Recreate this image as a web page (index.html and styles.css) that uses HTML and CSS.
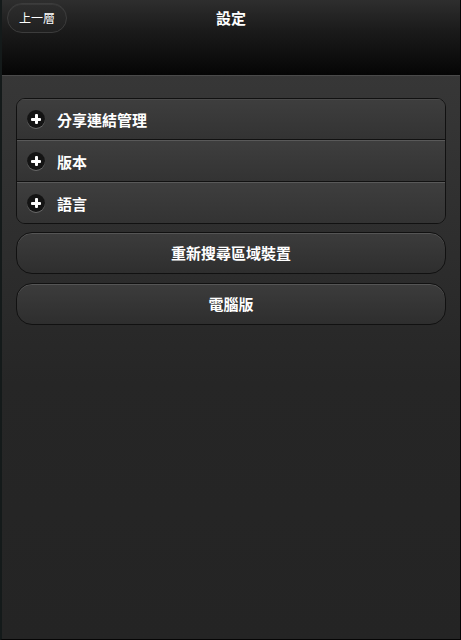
FILE: index.html
```html
<!DOCTYPE html>
<html lang="zh-Hant">

<head>
    <meta charset="UTF-8">
    <meta name="viewport" content="width=device-width, initial-scale=1.0">
    <title>設定</title>
    <link rel="stylesheet" href="styles.css">
</head>

<body>
    <div class="page">
        <header class="header">
            <a class="back-btn" href="javascript:void(0)">上一層</a>
            <h1>設定</h1>
        </header>

        <main class="content">
            <!-- 可展開的設定項目 -->
            <div class="collapsible-set">
                <div class="collapsible">
                    <span class="plus-icon"></span>
                    <span>分享連結管理</span>
                </div>
                <div class="collapsible">
                    <span class="plus-icon"></span>
                    <span>版本</span>
                </div>
                <div class="collapsible">
                    <span class="plus-icon"></span>
                    <span>語言</span>
                </div>
            </div>

            <a class="btn" href="javascript:void(0)">重新搜尋區域裝置</a>
            <a class="btn" href="javascript:void(0)">電腦版</a>
        </main>
    </div>
</body>

</html>
```

FILE: styles.css
```css
/* 頁面基本樣式 */
html, body {
    height: 100%;
}

body {
    margin: 0;
    font-family: "Noto Sans CJK TC", "Liberation Sans", sans-serif;
    background-color: #262626;
}

.page {
    box-sizing: border-box;
    height: 640px;
    display: flex;
    flex-direction: column;
    border-left: 2px solid #141a1a;
    border-right: 1px solid #050505;
    border-bottom: 1px solid #050505;
    background: linear-gradient(#3b3b3b, #262626 60%, #242424);
}

/* 標題列 */
.header {
    height: 76px;
    position: relative;
    background: linear-gradient(#2e2e2e, #1b1b1b 40%, #050505);
    border-bottom: 1px solid #4a4a4a;
    box-sizing: border-box;
}

.header h1 {
    margin: 0;
    padding-top: 7px;
    text-align: center;
    font-size: 15px;
    font-weight: bold;
    color: #fff;
    line-height: 22px;
}

.back-btn {
    position: absolute;
    left: 5px;
    top: 3px;
    width: 58px;
    height: 28px;
    border: 1px solid #3c3c3c;
    border-radius: 16px;
    background: linear-gradient(#2d2d2d, #202020);
    color: #fff;
    font-size: 12px;
    line-height: 28px;
    text-align: center;
    text-decoration: none;
    box-shadow: inset 0 1px 0 rgba(255, 255, 255, 0.06);
}

/* 內容 */
.content {
    padding: 22px 14px 0 14px;
    display: flex;
    flex-direction: column;
}

.collapsible-set {
    border: 1px solid #111;
    border-radius: 9px;
    overflow: hidden;
    margin-bottom: 8px;
}

.collapsible {
    height: 40px;
    display: flex;
    align-items: center;
    padding-left: 10px;
    gap: 12px;
    background: linear-gradient(#3e3e3e, #333);
    border-top: 1px solid #595959;
    border-bottom: 1px solid #111;
    color: #fff;
    font-size: 15px;
    font-weight: bold;
}

.collapsible:first-child {
    border-top: none;
    box-shadow: inset 0 1px 0 #4a4a4a;
}

.collapsible:last-child {
    border-bottom: none;
}

.plus-icon {
    position: relative;
    width: 18px;
    height: 18px;
    border-radius: 50%;
    background: #141414;
    box-shadow: 0 1px 0 rgba(255, 255, 255, 0.25);
}

.plus-icon::before,
.plus-icon::after {
    content: "";
    position: absolute;
    background: #fff;
    border-radius: 1px;
}

.plus-icon::before {
    left: 4px;
    top: 7.5px;
    width: 10px;
    height: 3px;
}

.plus-icon::after {
    left: 7.5px;
    top: 4px;
    width: 3px;
    height: 10px;
}

.btn {
    display: block;
    height: 40px;
    line-height: 40px;
    margin-bottom: 9px;
    border: 1px solid #111;
    border-radius: 16px;
    background: linear-gradient(#3c3c3c, #2e2e2e);
    box-shadow: inset 0 1px 0 #555;
    color: #fff;
    font-size: 15px;
    font-weight: bold;
    text-align: center;
    text-decoration: none;
}
```
